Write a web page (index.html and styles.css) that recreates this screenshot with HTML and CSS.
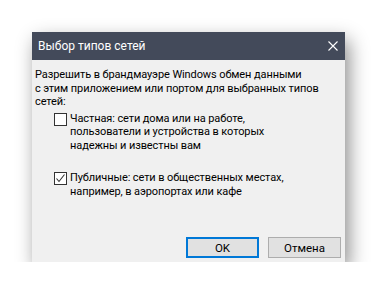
FILE: index.html
```html
<!DOCTYPE html>
<html lang="ru">
  <head>
    <meta charset="UTF-8" />
    <meta name="viewport" content="width=device-width, initial-scale=1.0" />
    <title>Выбор типов сетей</title>
    <link rel="stylesheet" href="styles.css">
  </head>
  <body>
    <div class="dialog">
      <div class="titlebar">
        <span class="title">Выбор типов сетей</span>
        <svg class="close" width="10" height="10" viewBox="0 0 10 10">
          <path d="M0.5 0.5L9.5 9.5M9.5 0.5L0.5 9.5" stroke="#ffffff" stroke-width="1.1" />
        </svg>
      </div>
      <div class="content">
        <p class="intro">
          Разрешить в брандмауэре Windows обмен данными<br />
          с этим приложением или портом для выбранных типов<br />
          сетей:
        </p>
        <div class="option">
          <span class="checkbox"></span>
          <span class="label">
            Частная: сети дома или на работе,<br />
            пользователи и устройства в которых<br />
            надежны и известны вам
          </span>
        </div>
        <div class="option second">
          <span class="checkbox">
            <svg width="11" height="11" viewBox="0 0 11 11">
              <path d="M1.5 5.5L4 8.5L9.5 1.5" fill="none" stroke="#333333" stroke-width="1.1" />
            </svg>
          </span>
          <span class="label">
            Публичные: сети в общественных местах,<br />
            например, в аэропортах или кафе
          </span>
        </div>
        <div class="buttons">
          <button class="btn primary">OK</button>
          <button class="btn">Отмена</button>
        </div>
      </div>
    </div>
  </body>
</html>
```

FILE: styles.css
```css
body {
  margin: 0;
  background: #ffffff;
  font-family: Roboto, "Noto Sans", sans-serif;
  font-size: 11px;
  letter-spacing: -0.1px;
  color: #000000;
}
.dialog {
  margin: 32px 0 0 32px;
  width: 313px;
  height: 230px;
  background: #f0f0f0;
  display: flex;
  flex-direction: column;
  box-shadow: 4px 8px 18px rgba(0, 0, 0, 0.45);
}
.titlebar {
  height: 28px;
  flex-shrink: 0;
  background: #434a5a;
  color: #ffffff;
  display: flex;
  align-items: center;
  justify-content: space-between;
  padding: 0 7px 0 6px;
}
.title {
  font-size: 12px;
  letter-spacing: 0;
}
.content {
  flex: 1;
  display: flex;
  flex-direction: column;
  padding: 8px 4px 4px 3px;
  white-space: nowrap;
}
.intro {
  margin: 0;
  line-height: 13.5px;
}
.option {
  display: flex;
  gap: 3px;
  margin: 3px 0 0 19px;
  line-height: 13.5px;
}
.second {
  margin-top: 19px;
}
.checkbox {
  width: 11px;
  height: 11px;
  margin-top: 1px;
  border: 1px solid #333333;
  background: #ffffff;
  flex-shrink: 0;
  display: flex;
  align-items: center;
  justify-content: center;
}
.buttons {
  margin-top: auto;
  display: flex;
  justify-content: flex-end;
  gap: 9px;
}
.btn {
  width: 73px;
  height: 21px;
  border: 1px solid #adadad;
  background: #e1e1e1;
  font-family: inherit;
  font-size: 11.5px;
  padding: 0;
}
.primary {
  border: 2px solid #0078d7;
}
```
